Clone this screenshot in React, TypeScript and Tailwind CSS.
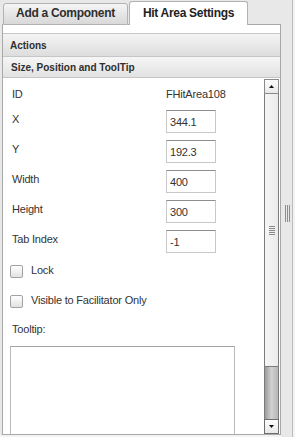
import React from "react";

function Checkbox() {
  return (
    <div className="w-[13px] h-[13px] shrink-0 border border-[#a2a2a2] rounded-[2px] bg-linear-to-b from-white to-[#e2e2e2]" />
  );
}

function Field({ label, value }: { label: string; value: string }) {
  return (
    <div className="flex items-start h-[23px]">
      <div className="w-[156px] pl-[2px] pt-[2px] leading-[14px]">{label}</div>
      <input
        readOnly
        value={value}
        className="w-[50px] h-[23px] border border-[#c8c8c8] border-t-[#8e8e8e] px-[3px] text-[11px] tracking-[-0.2px] text-[#333] bg-white outline-none"
      />
    </div>
  );
}

function ArrowUp() {
  return (
    <svg width="5" height="3" viewBox="0 0 5 3">
      <polygon points="0,3 2.5,0 5,3" fill="#111" />
    </svg>
  );
}

function ArrowDown() {
  return (
    <svg width="5" height="3" viewBox="0 0 5 3">
      <polygon points="0,0 5,0 2.5,3" fill="#111" />
    </svg>
  );
}

export default function App() {
  return (
    <div className="w-[295px] h-[437px] bg-[#e8e8e8] flex overflow-hidden font-['Liberation_Sans',Arial,sans-serif] text-[#333]">
      <div className="w-[281px] flex flex-col">
        {/* tabs */}
        <div className="h-[25px] flex items-end pl-[2px] shrink-0">
          <div className="w-px h-px bg-[#a9a9a9]" />
          <div className="w-[125px] h-[22px] border border-[#b2b2b2] rounded-t-[3px] bg-linear-to-b from-[#f5f5f5] to-[#d8d8d8] flex items-center justify-center pb-[2px] text-[12px] leading-[15px] font-bold tracking-[-0.3px] text-[#2e2e2e]">
            Add a Component
          </div>
          <div className="w-px h-px bg-[#a9a9a9]" />
          <div className="w-[119px] h-[24px] border border-b-0 border-[#b2b2b2] rounded-t-[3px] bg-white flex justify-center pt-[4px] text-[12px] leading-[15px] font-bold tracking-[-0.3px] text-[#222]">
            Hit Area Settings
          </div>
          <div className="flex-1 h-px bg-[#a9a9a9]" />
        </div>

        {/* panel */}
        <div className="ml-[2px] w-[279px] h-[410px] shrink-0 bg-white border-x border-b border-[#a9a9a9] flex flex-col">
          <div className="h-[8px] shrink-0" />
          <div className="h-[24px] shrink-0 border-y border-[#c6c6c6] bg-linear-to-b from-[#f4f4f4] to-[#dddddd] flex items-center pl-[7px] text-[10px] font-bold text-[#2e2e2e]">
            Actions
          </div>
          <div className="h-[21px] shrink-0 border-b border-[#c6c6c6] bg-linear-to-b from-[#f6f6f6] to-[#e2e2e2] flex items-center pl-[8px] text-[10px] font-bold text-[#2e2e2e]">
            Size, Position and ToolTip
          </div>

          <div className="flex-1 flex min-h-0">
            {/* content */}
            <div className="flex-1 min-w-0 overflow-hidden pl-[7px] pt-[9px] text-[11px] tracking-[-0.2px]">
              <div className="flex h-[14px] leading-[14px]">
                <div className="w-[156px] pl-[2px]">ID</div>
                <div>FHitArea108</div>
              </div>
              <div className="mt-[9px] flex flex-col gap-[7px]">
                <Field label="X" value="344.1" />
                <Field label="Y" value="192.3" />
                <Field label="Width" value="400" />
                <Field label="Height" value="300" />
                <Field label="Tab Index" value="-1" />
              </div>
              <div className="mt-[12px] flex items-start h-[13px]">
                <Checkbox />
                <div className="ml-[8px] -mt-[2px] leading-[14px]">Lock</div>
              </div>
              <div className="mt-[17px] flex items-start h-[13px]">
                <Checkbox />
                <div className="ml-[8px] -mt-[2px] leading-[14px]">Visible to Facilitator Only</div>
              </div>
              <div className="mt-[14px] pl-[2px] leading-[14px]">Tooltip:</div>
              <textarea
                readOnly
                className="mt-[10px] block w-[225px] h-[120px] border border-[#bababa] border-t-[#a4a4a4] bg-white resize-none outline-none"
              />
            </div>

            {/* scrollbar */}
            <div className="w-[15px] mt-[1px] mr-[1px] shrink-0 flex flex-col">
              <div className="h-[15px] shrink-0 border border-[#8a8a8a] bg-linear-to-b from-[#fdfdfd] to-[#e9e9e9] flex items-center justify-center">
                <ArrowUp />
              </div>
              <div className="h-[273px] shrink-0 border-x border-b border-[#7c7c7c] bg-linear-to-r from-[#f6f6f6] to-[#ebebeb] flex items-center justify-center">
                <div className="flex flex-col gap-[1px] w-[6px]">
                  <div className="h-px bg-[#8a8a8a]" />
                  <div className="h-px bg-[#8a8a8a]" />
                  <div className="h-px bg-[#8a8a8a]" />
                  <div className="h-px bg-[#8a8a8a]" />
                  <div className="h-px bg-[#8a8a8a]" />
                </div>
              </div>
              <div className="flex-1 border-x border-[#7c7c7c] bg-linear-to-r from-[#9c9c9c] via-[#d2d2d2] to-[#b6b6b6]" />
              <div className="h-[15px] shrink-0 border border-[#6e6e6e] bg-linear-to-b from-[#fdfdfd] to-[#e9e9e9] flex items-center justify-center">
                <ArrowDown />
              </div>
            </div>
          </div>
        </div>
        <div className="flex-1 bg-[#f2f2f2]" />
      </div>

      {/* splitter */}
      <div className="w-[11px] pl-[4px] pt-[205px]">
        <div className="flex gap-[1px] h-[17px]">
          <div className="w-px bg-[#8e8e8e]" />
          <div className="w-px bg-[#8e8e8e]" />
          <div className="w-px bg-[#8e8e8e]" />
        </div>
      </div>
      <div className="w-px bg-[#bdbdbd]" />
      <div className="w-[2px] bg-[#f3f3f3]" />
    </div>
  );
}
